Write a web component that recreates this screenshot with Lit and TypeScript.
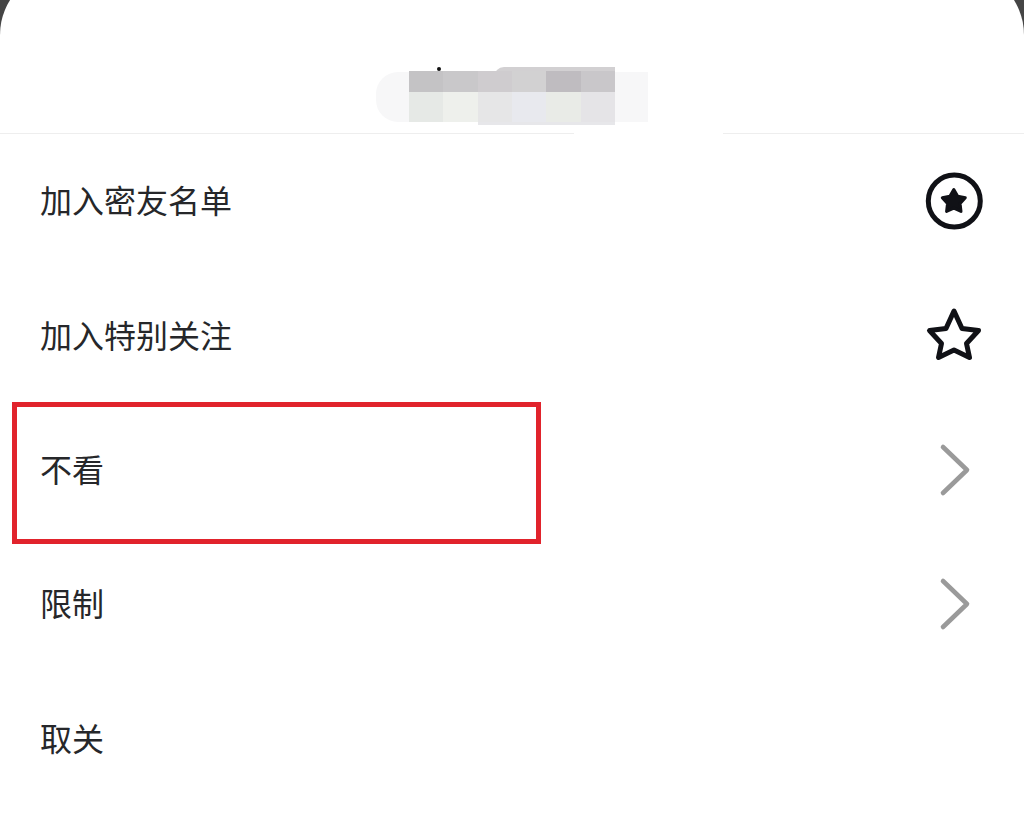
import { LitElement, html, css, svg } from "lit";
import { customElement } from "lit/decorators.js";

const top = ["#c4c3c5", "#c9c8ca", "#cfcccf", "#d2d1d2", "#bfbcc0", "#c9c7ca"];
const bottom = ["#e6e9e6", "#eef0ec", "#e6e6e7", "#e8e9ee", "#e9ebe7", "#e5e4e7"];

const circleStar = svg`
  <circle cx="30.3" cy="30" r="26" fill="none" stroke="#101116" stroke-width="5"/>
  <path d="M29.8 18.5 L33.7 25.2 L41.3 26.8 L36.1 32.6 L37 40.4 L29.8 37.2 L22.6 40.4 L23.5 32.6 L18.3 26.8 L25.9 25.2 Z"
    fill="#101116" stroke="#101116" stroke-width="3" stroke-linejoin="round"/>`;

const outlineStar = svg`
  <path d="M30 5 L38 22.5 L54.5 24.5 L42.5 37.5 L45.5 51.5 L30 44 L14.5 51.5 L17.5 37.5 L5.5 24.5 L22 22.5 Z"
    fill="none" stroke="#101116" stroke-width="5" stroke-linejoin="round"/>`;

const chevron = svg`
  <path d="M19 7 L43 30 L19 53" fill="none" stroke="#9a9a9a" stroke-width="4.6" stroke-linecap="round" stroke-linejoin="round"/>`;

const rows = [
  { label: "加入密友名单", icon: circleStar },
  { label: "加入特别关注", icon: outlineStar },
  { label: "不看", icon: chevron },
  { label: "限制", icon: chevron },
  { label: "取关", icon: null },
];

@customElement("app-root")
export class AppRoot extends LitElement {
  static styles = css`
    :host {
      display: block;
      height: 821px;
      overflow: hidden;
      background: #454545;
      font-family: "Noto Sans CJK SC", "Noto Sans", sans-serif;
    }
    .sheet {
      position: relative;
      height: 852px;
      margin-top: -31px;
      background: #fff;
      border-radius: 66px 66px 0 0;
    }
    .header {
      position: relative;
      height: 165px;
      box-sizing: border-box;
      border-bottom: 1px solid #eeeeee;
    }
    .blob {
      position: absolute;
      left: 376px;
      top: 103px;
      width: 272px;
      height: 50px;
      background: #f7f7f8;
      border-radius: 22px 0 0 22px;
    }
    .blob-top {
      position: absolute;
      left: 494px;
      top: 98px;
      width: 121px;
      height: 10px;
      background: #d2d0d2;
      border-radius: 10px 0 0 0;
    }
    .mosaic {
      position: absolute;
      left: 409px;
      top: 102px;
      width: 206px;
      display: grid;
      grid-template-columns: repeat(6, 1fr);
      grid-template-rows: 21px 30px;
    }
    .tail {
      position: absolute;
      left: 478px;
      top: 153px;
      width: 137px;
      height: 3px;
      background: #e7e7ea;
    }
    .dot {
      position: absolute;
      left: 437px;
      top: 98px;
      width: 4px;
      height: 4px;
      border-radius: 50%;
      background: #111;
    }
    .gap {
      position: absolute;
      left: 574px;
      top: 164px;
      width: 149px;
      height: 1px;
      background: #fff;
    }
    .row {
      height: 134.4px;
      box-sizing: border-box;
      padding: 0 40px;
      display: flex;
      align-items: center;
      justify-content: space-between;
      font-size: 32px;
      line-height: 1;
      color: #26272a;
    }
    .row span {
      margin-bottom: 4px;
    }
    .row svg {
      width: 60px;
      height: 60px;
      display: block;
    }
    .highlight {
      position: absolute;
      left: 12px;
      top: 433px;
      width: 529px;
      height: 142px;
      box-sizing: border-box;
      border: 5px solid #e1232c;
      pointer-events: none;
    }
  `;

  render() {
    return html`
      <div class="sheet">
        <div class="header">
          <div class="blob"></div>
          <div class="blob-top"></div>
          <div class="mosaic">
            ${top.map((c) => html`<i style="background:${c}"></i>`)}
            ${bottom.map((c) => html`<i style="background:${c}"></i>`)}
          </div>
          <div class="tail"></div>
          <div class="dot"></div>
          <div class="gap"></div>
        </div>
        ${rows.map(
          (r) => html`
            <div class="row">
              <span>${r.label}</span>
              ${r.icon ? html`<svg viewBox="0 0 60 60">${r.icon}</svg>` : null}
            </div>
          `
        )}
        <div class="highlight"></div>
      </div>
    `;
  }
}
